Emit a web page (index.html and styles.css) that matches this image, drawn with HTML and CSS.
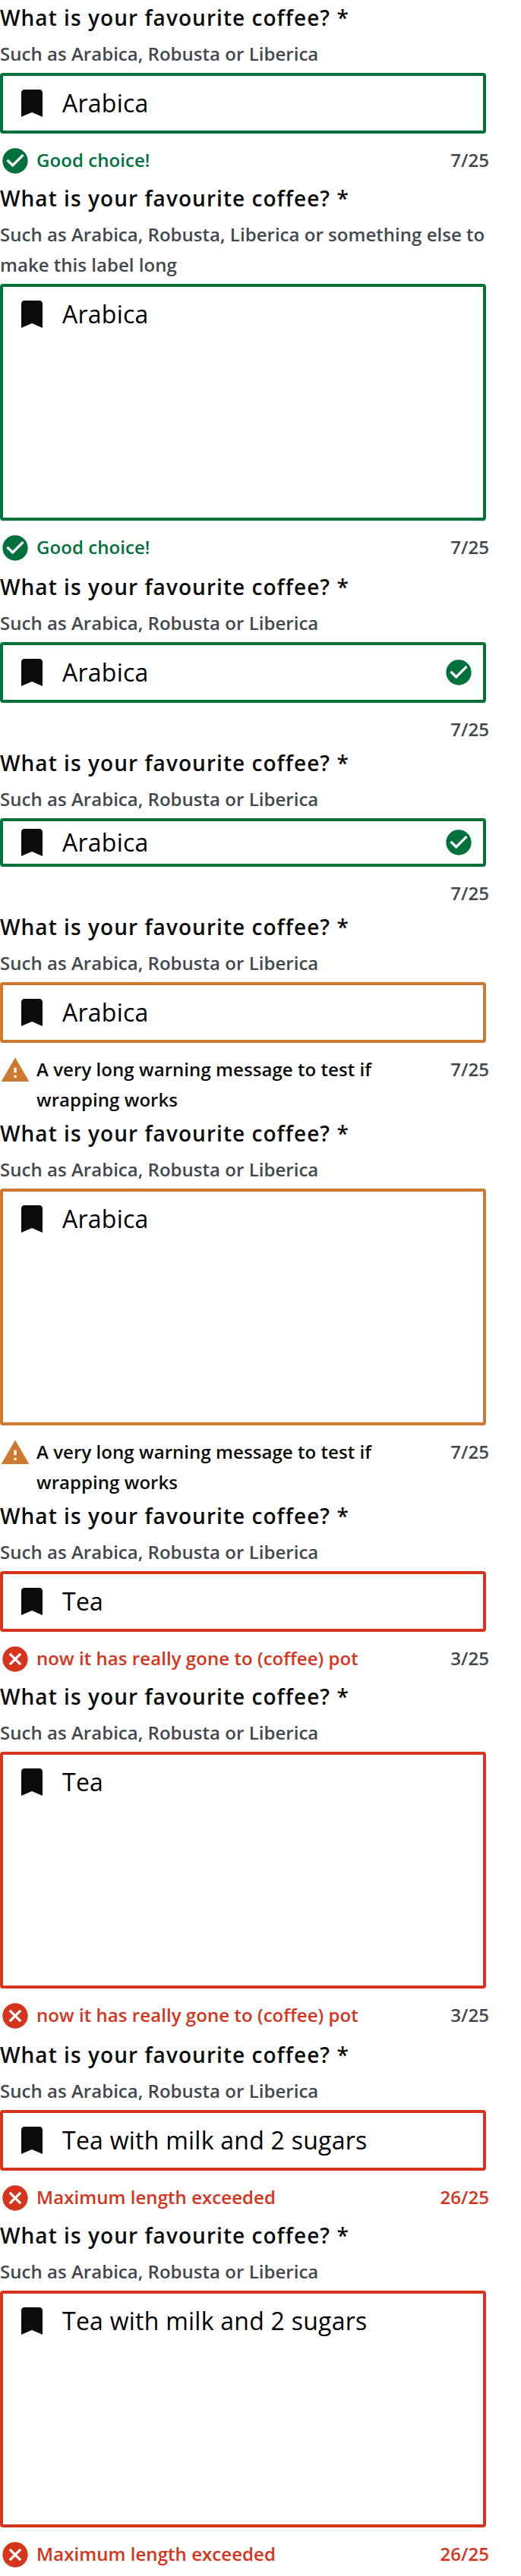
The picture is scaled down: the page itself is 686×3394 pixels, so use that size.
FILE: index.html
```
<!DOCTYPE html>
<html lang="en">
<head>
<meta charset="utf-8">
<title>Text fields</title>
<link rel="stylesheet" href="styles.css">
</head>
<body>
<svg class="sprite" width="0" height="0">
  <symbol id="bookmark" viewBox="0 0 24 24"><path d="M17 3H7c-1.1 0-1.99.9-1.99 2L5 21l7-3 7 3V5c0-1.1-.9-2-2-2z"/></symbol>
  <symbol id="check" viewBox="0 0 24 24"><path d="M12 2C6.48 2 2 6.48 2 12s4.48 10 10 10 10-4.48 10-10S17.52 2 12 2zm-2 15l-5-5 1.41-1.41L10 14.17l7.59-7.59L19 8l-9 9z"/></symbol>
  <symbol id="warn" viewBox="0 0 24 24"><path d="M1 21h22L12 2 1 21zm12-3h-2v-2h2v2zm0-4h-2v-4h2v4z"/></symbol>
  <symbol id="error" viewBox="0 0 24 24"><path d="M12 2C6.47 2 2 6.47 2 12s4.47 10 10 10 10-4.47 10-10S17.53 2 12 2zm5 13.59L15.59 17 12 13.41 8.41 17 7 15.59 10.59 12 7 8.41 8.41 7 12 10.59 15.59 7 17 8.41 13.41 12 17 15.59z"/></symbol>
</svg>
<main class="fields">
  <section class="field success">
    <div class="label">What is your favourite coffee? *</div>
    <div class="hint">Such as Arabica, Robusta or Liberica</div>
    <div class="box"><svg class="lead"><use href="#bookmark"/></svg><span class="value">Arabica</span></div>
    <div class="foot"><svg class="status"><use href="#check"/></svg><span class="message">Good choice!</span><span class="count">7/25</span></div>
  </section>
  <section class="field success multiline">
    <div class="label">What is your favourite coffee? *</div>
    <div class="hint">Such as Arabica, Robusta, Liberica or something else to make this label long</div>
    <div class="box"><svg class="lead"><use href="#bookmark"/></svg><span class="value">Arabica</span></div>
    <div class="foot"><svg class="status"><use href="#check"/></svg><span class="message">Good choice!</span><span class="count">7/25</span></div>
  </section>
  <section class="field success inline">
    <div class="label">What is your favourite coffee? *</div>
    <div class="hint">Such as Arabica, Robusta or Liberica</div>
    <div class="box"><svg class="lead"><use href="#bookmark"/></svg><span class="value">Arabica</span><svg class="status"><use href="#check"/></svg></div>
    <div class="foot"><span class="count">7/25</span></div>
  </section>
  <section class="field success inline compact">
    <div class="label">What is your favourite coffee? *</div>
    <div class="hint">Such as Arabica, Robusta or Liberica</div>
    <div class="box"><svg class="lead"><use href="#bookmark"/></svg><span class="value">Arabica</span><svg class="status"><use href="#check"/></svg></div>
    <div class="foot"><span class="count">7/25</span></div>
  </section>
  <section class="field warning">
    <div class="label">What is your favourite coffee? *</div>
    <div class="hint">Such as Arabica, Robusta or Liberica</div>
    <div class="box"><svg class="lead"><use href="#bookmark"/></svg><span class="value">Arabica</span></div>
    <div class="foot"><svg class="status"><use href="#warn"/></svg><span class="message">A very long warning message to test if wrapping works</span><span class="count">7/25</span></div>
  </section>
  <section class="field warning multiline">
    <div class="label">What is your favourite coffee? *</div>
    <div class="hint">Such as Arabica, Robusta or Liberica</div>
    <div class="box"><svg class="lead"><use href="#bookmark"/></svg><span class="value">Arabica</span></div>
    <div class="foot"><svg class="status"><use href="#warn"/></svg><span class="message">A very long warning message to test if wrapping works</span><span class="count">7/25</span></div>
  </section>
  <section class="field error">
    <div class="label">What is your favourite coffee? *</div>
    <div class="hint">Such as Arabica, Robusta or Liberica</div>
    <div class="box"><svg class="lead"><use href="#bookmark"/></svg><span class="value">Tea</span></div>
    <div class="foot"><svg class="status"><use href="#error"/></svg><span class="message">now it has really gone to (coffee) pot</span><span class="count">3/25</span></div>
  </section>
  <section class="field error multiline">
    <div class="label">What is your favourite coffee? *</div>
    <div class="hint">Such as Arabica, Robusta or Liberica</div>
    <div class="box"><svg class="lead"><use href="#bookmark"/></svg><span class="value">Tea</span></div>
    <div class="foot"><svg class="status"><use href="#error"/></svg><span class="message">now it has really gone to (coffee) pot</span><span class="count">3/25</span></div>
  </section>
  <section class="field error">
    <div class="label">What is your favourite coffee? *</div>
    <div class="hint">Such as Arabica, Robusta or Liberica</div>
    <div class="box"><svg class="lead"><use href="#bookmark"/></svg><span class="value">Tea with milk and 2 sugars</span></div>
    <div class="foot"><svg class="status"><use href="#error"/></svg><span class="message">Maximum length exceeded</span><span class="count over">26/25</span></div>
  </section>
  <section class="field error multiline">
    <div class="label">What is your favourite coffee? *</div>
    <div class="hint">Such as Arabica, Robusta or Liberica</div>
    <div class="box"><svg class="lead"><use href="#bookmark"/></svg><span class="value">Tea with milk and 2 sugars</span></div>
    <div class="foot"><svg class="status"><use href="#error"/></svg><span class="message">Maximum length exceeded</span><span class="count over">26/25</span></div>
  </section>
</main>
</body>
</html>
```
FILE: styles.css
```
body {
  margin: 0;
  background: #fff;
  color: #0b0c0c;
  font-family: "Open Sans", "Noto Sans", sans-serif;
}

.sprite { display: block; }

.fields { width: 644px; }

.success { --state: #00703c; --text: #00703c; }
.warning { --state: #cf7930; --text: #0b0c0c; }
.error { --state: #d4351c; --text: #d4351c; }

.label {
  height: 48px;
  padding-bottom: 3px;
  font-size: 28px;
  font-weight: 600;
  line-height: 46px;
  letter-spacing: 1.05px;
}

.hint {
  padding-bottom: 5px;
  color: #43484f;
  font-size: 24px;
  font-weight: 600;
  line-height: 40px;
  letter-spacing: 0.03px;
}

.box {
  display: flex;
  align-items: flex-start;
  box-sizing: border-box;
  width: 640px;
  height: 80px;
  padding: 12px 12px 12px 14px;
  border: 4px solid var(--state);
  border-radius: 4px;
}

.multiline .box { height: 312px; }

.compact .box {
  height: 64px;
  padding-top: 4px;
  padding-bottom: 4px;
}

.lead {
  flex: none;
  width: 48px;
  height: 48px;
  fill: #0b0c0c;
}

.value {
  flex: 1;
  padding-left: 16px;
  color: #000;
  font-size: 32px;
  line-height: 48px;
  letter-spacing: 0.25px;
}

.status {
  flex: none;
  width: 40px;
  height: 40px;
  margin-top: 1px;
  fill: var(--state);
}

.box .status { margin-top: 4px; }

.foot {
  display: flex;
  align-items: flex-start;
  min-height: 46px;
  padding: 15px 0 1px;
  font-size: 24px;
  font-weight: 600;
  line-height: 40px;
  letter-spacing: 0.06px;
}

.multiline .foot { min-height: 48px; }
.warning .foot { min-height: 80px; }
.inline .foot { min-height: 40px; }

.message {
  padding-left: 8px;
  color: var(--text);
}

.count {
  margin-left: auto;
  color: #43484f;
}

.count.over { color: #d4351c; }
```
